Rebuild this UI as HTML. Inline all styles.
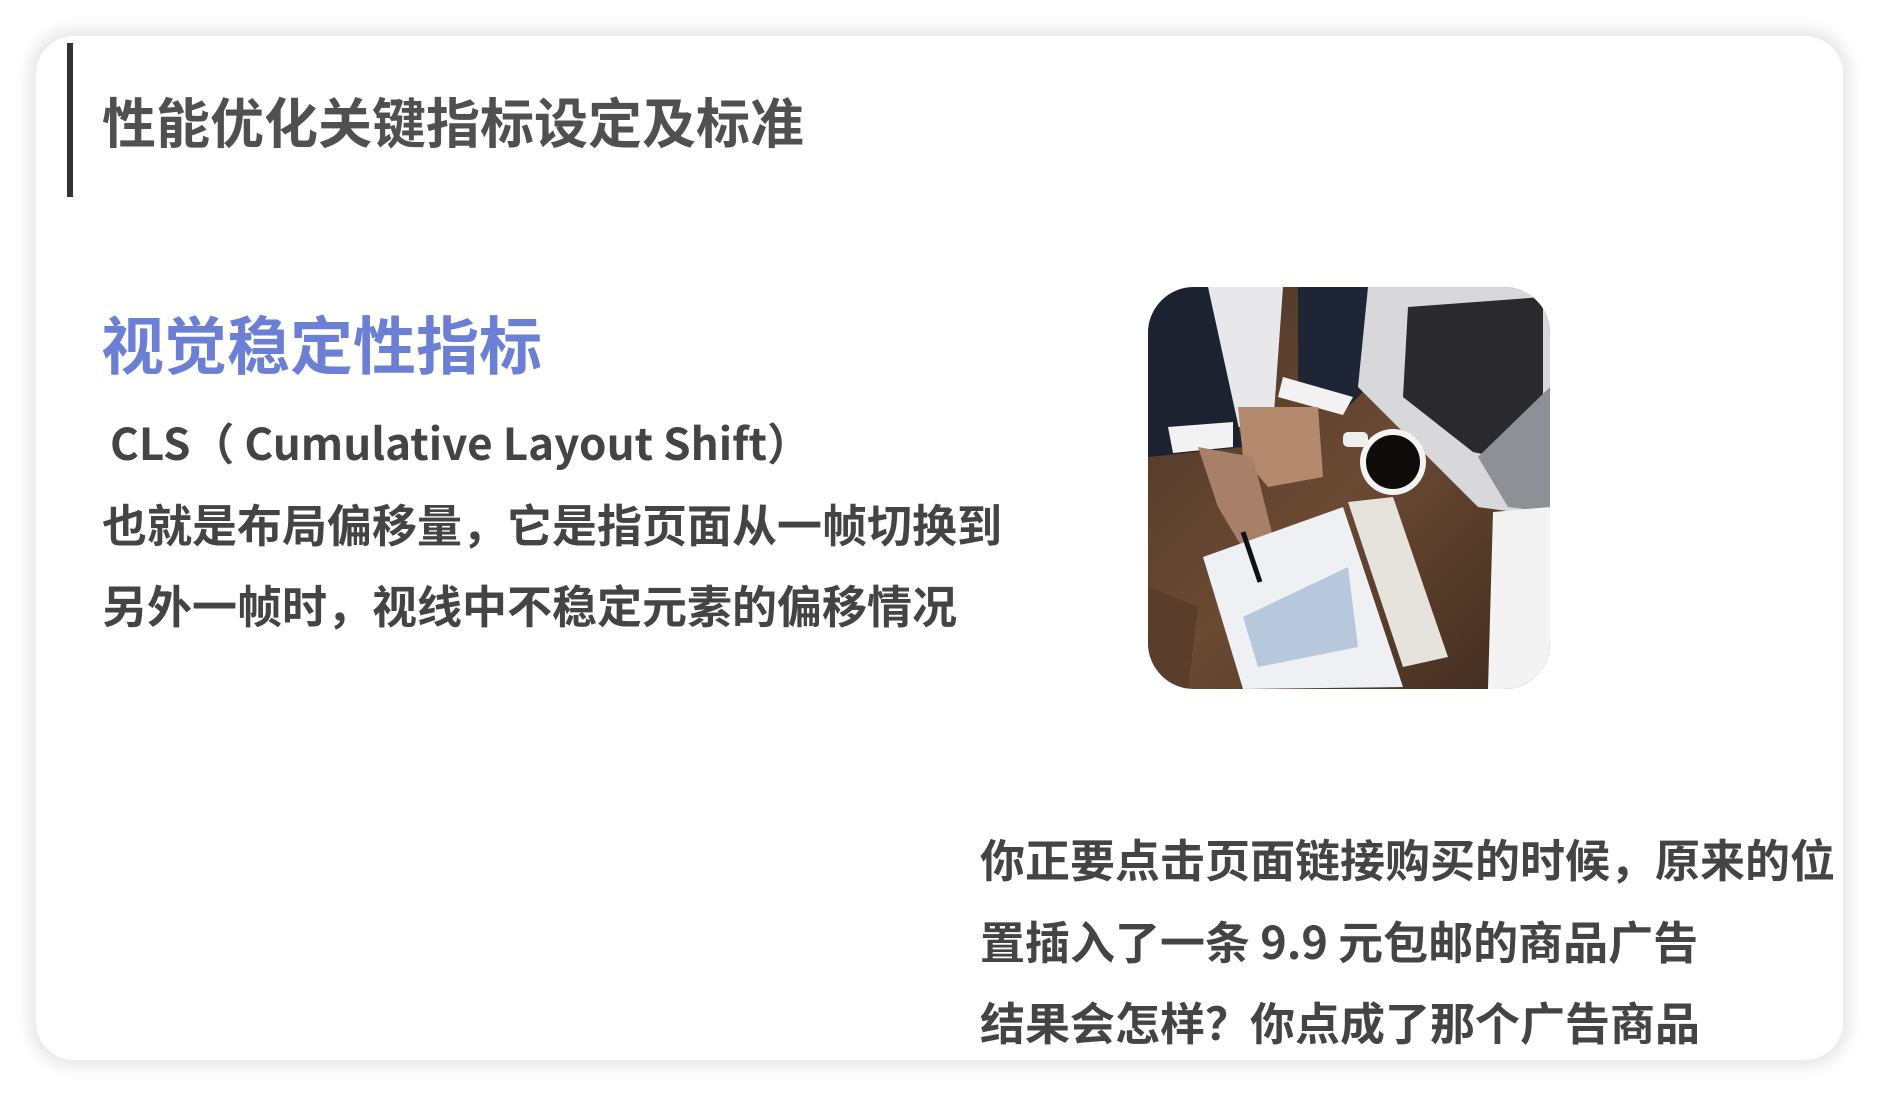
<!DOCTYPE html>
<html><head><meta charset="utf-8"><style>
html,body{margin:0;padding:0;width:1878px;height:1096px;background:#fff;overflow:hidden}
body{font-family:"Liberation Sans","Noto Sans CJK SC",sans-serif;position:relative}
.card{position:absolute;left:36px;top:36px;width:1807px;height:1024px;background:#fff;border-radius:38px;box-shadow:0 0 14px 8px rgba(0,0,0,.09)}
.bar{position:absolute;left:67px;top:43px;width:6px;height:154px;background:#333}
.t{position:absolute;white-space:nowrap;font-weight:bold;color:#444;font-family:"Noto Sans CJK SC",sans-serif}
</style></head><body>
<div class="card"></div>
<div class="bar"></div>
<div class="t" style="left:102px;top:88px;font-size:54px;line-height:64px;color:#505050">性能优化关键指标设定及标准</div>
<div class="t" style="left:101px;top:306px;font-size:63px;line-height:74px;color:#6b7fd4">视觉稳定性指标</div>
<div class="t" style="left:110px;top:413px;font-size:44px;line-height:56px;font-weight:600">CLS（ Cumulative Layout Shift）</div>
<div class="t" style="left:102px;top:495px;font-size:45px;line-height:56px">也就是布局偏移量，它是指页面从一帧切换到</div>
<div class="t" style="left:102px;top:576px;font-size:45px;line-height:56px">另外一帧时，视线中不稳定元素的偏移情况</div>
<div class="t" style="left:980px;top:830px;font-size:45px;line-height:56px">你正要点击页面链接购买的时候，原来的位</div>
<div class="t" style="left:980px;top:912px;font-size:45px;line-height:56px">置插入了一条 9.9 元包邮的商品广告</div>
<div class="t" style="left:980px;top:993px;font-size:45px;line-height:56px">结果会怎样？你点成了那个广告商品</div>
<svg style="position:absolute;left:1148px;top:287px" width="402" height="402" viewBox="0 0 402 402">
<defs><clipPath id="c"><rect width="402" height="402" rx="46"/></clipPath>
<linearGradient id="w" x1="0" y1="0" x2="1" y2="1"><stop offset="0" stop-color="#4a3426"/><stop offset=".5" stop-color="#6b4a33"/><stop offset="1" stop-color="#3d2a1e"/></linearGradient></defs>
<g clip-path="url(#c)">
<rect width="402" height="402" fill="url(#w)"/>
<polygon points="40,0 135,0 125,140 60,140" fill="#e8e8ea"/>
<polygon points="0,0 60,0 95,160 0,170" fill="#1c2230"/>
<polygon points="150,0 270,0 230,90 200,120 150,100" fill="#1e2535"/>
<polygon points="135,90 205,110 195,128 130,110" fill="#f2f2f2"/>
<polygon points="20,140 85,135 85,160 25,166" fill="#f2f2f2"/>
<polygon points="90,120 170,120 175,190 120,200 95,170" fill="#b48a6e"/>
<polygon points="50,160 105,170 125,250 100,270 70,220" fill="#a8806a"/>
<polygon points="220,0 402,0 402,230 330,220 210,100" fill="#d8d8da"/>
<polygon points="260,20 395,10 395,180 325,165 255,110" fill="#2a2a2e"/>
<polygon points="330,170 402,100 402,225 360,220" fill="#8e9096"/>
<circle cx="245" cy="175" r="33" fill="#f4f4f4"/><circle cx="245" cy="175" r="27" fill="#0e0b0a"/>
<rect x="195" y="145" width="25" height="15" rx="5" fill="#eee"/>
<polygon points="55,270 195,220 255,400 95,402" fill="#eef0f4"/>
<polygon points="200,215 245,210 300,370 255,380" fill="#e6e3dc"/>
<polygon points="95,330 200,280 210,360 110,380" fill="#b8c8dc"/>
<polygon points="345,225 402,220 402,402 340,402" fill="#f3f3f3"/>
<polygon points="0,300 50,320 40,402 0,402" fill="#5a3e2b"/>
<line x1="95" y1="245" x2="112" y2="295" stroke="#111" stroke-width="5"/>
</g></svg>
</body></html>
